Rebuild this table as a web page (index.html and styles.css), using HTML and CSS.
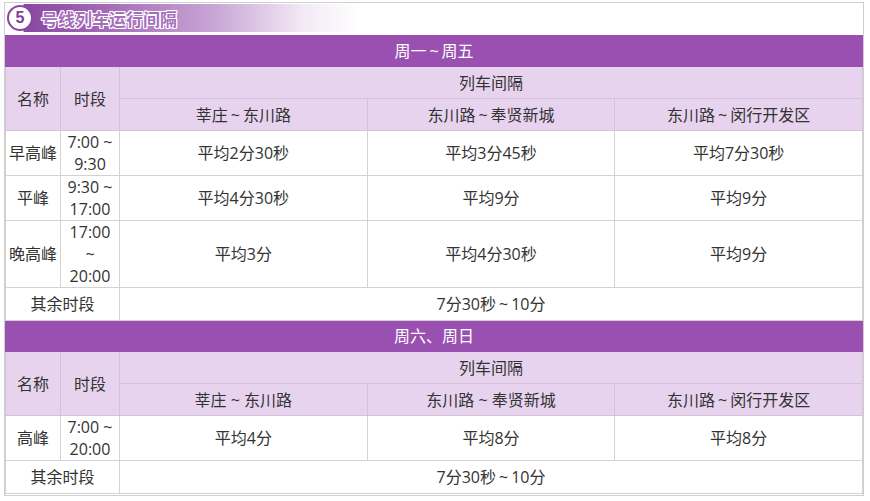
FILE: index.html
```html
<!DOCTYPE html>
<html lang="zh-CN">
<head>
<meta charset="utf-8">
<title>5号线列车运行间隔</title>
<link rel="stylesheet" href="styles.css">
</head>
<body>
<div class="frame">
  <div class="banner">
    <span class="num">5</span>
    <span class="title">号线列车运行间隔</span>
  </div>
  <table class="grid">
    <colgroup>
      <col class="c-name"><col class="c-time"><col class="c-int"><col class="c-int"><col class="c-int">
    </colgroup>
    <tr class="day"><td colspan="5">周一<span class="tl">~</span>周五</td></tr>
    <tr class="head"><td rowspan="2">名称</td><td rowspan="2">时段</td><td colspan="3">列车间隔</td></tr>
    <tr class="head"><td>莘庄<span class="tl">~</span>东川路</td><td>东川路<span class="tl">~</span>奉贤新城</td><td>东川路<span class="tl">~</span>闵行开发区</td></tr>
    <tr class="two"><td>早高峰</td><td>7:00 ~<br>9:30</td><td>平均2分30秒</td><td>平均3分45秒</td><td>平均7分30秒</td></tr>
    <tr class="two"><td>平峰</td><td>9:30 ~<br>17:00</td><td>平均4分30秒</td><td>平均9分</td><td>平均9分</td></tr>
    <tr class="three"><td>晚高峰</td><td>17:00<br>~<br>20:00</td><td>平均3分</td><td>平均4分30秒</td><td>平均9分</td></tr>
    <tr class="one"><td colspan="2">其余时段</td><td colspan="3">7分30秒<span class="tl">~</span>10分</td></tr>
    <tr class="day"><td colspan="5">周六、周日</td></tr>
    <tr class="head"><td rowspan="2">名称</td><td rowspan="2">时段</td><td colspan="3">列车间隔</td></tr>
    <tr class="head"><td>莘庄 ~ 东川路</td><td>东川路 ~ 奉贤新城</td><td>东川路<span class="tl">~</span>闵行开发区</td></tr>
    <tr class="two"><td>高峰</td><td>7:00 ~<br>20:00</td><td>平均4分</td><td>平均8分</td><td>平均8分</td></tr>
    <tr class="one"><td colspan="2">其余时段</td><td colspan="3">7分30秒<span class="tl">~</span>10分</td></tr>
  </table>
</div>
</body>
</html>
```
FILE: styles.css
```css
html, body {
  margin: 0;
  padding: 0;
  background: #fff;
}
body {
  font-family: "Open Sans", "Noto Sans CJK SC", sans-serif;
  font-size: 16px;
  color: #333;
}
.frame {
  margin: 2px 0 0 4px;
  width: 858px;
  border: 1px solid #cfcfcf;
  padding-bottom: 1px;
}
.banner {
  display: flex;
  align-items: center;
  height: 28px;
  margin: 1px 0 3px 0;
  background: linear-gradient(to right, #fff 0px, #fff 18px, #8a47a0 19px, #9a5ab0 70px, #c9a6d6 210px, #f3ebf6 300px, #fff 355px, #fff 100%);
}
.num {
  width: 22px;
  height: 22px;
  margin-left: 2px;
  border: 2px solid #8a47a0;
  border-radius: 50%;
  background: #fff;
  color: #7d3f93;
  font-family: "Liberation Sans", Arial, sans-serif;
  font-weight: bold;
  font-size: 16px;
  display: flex;
  align-items: center;
  justify-content: center;
  line-height: 1;
}
.title {
  margin-left: 8px;
  font-family: "Noto Sans CJK SC", sans-serif;
  font-weight: bold;
  font-size: 17px;
  color: #a56fbb;
  text-shadow: 1px 0 0 #fff, -1px 0 0 #fff, 0 1px 0 #fff, 0 -1px 0 #fff, 1px 1px 0 #fff, -1px -1px 0 #fff, 1px -1px 0 #fff, -1px 1px 0 #fff;
}
.tl {
  margin: 0 3px;
}
.grid {
  width: 858px;
  border-collapse: collapse;
  table-layout: fixed;
}
.c-name { width: 55px; }
.c-time { width: 59px; }
.c-int { width: auto; }
.grid td {
  border: 1px solid #d2d2d2;
  text-align: center;
  vertical-align: middle;
  padding: 0;
  line-height: 22px;
}
.day td {
  background: #9a50b0;
  border-color: #9a50b0;
  color: #fff;
  height: 30px;
}
.head td {
  background: #e8d3ef;
  border-color: #d2c3d8;
  height: 31px;
}
.two td { height: 44px; }
.three td { height: 66px; }
.one td { height: 32px; }
```
